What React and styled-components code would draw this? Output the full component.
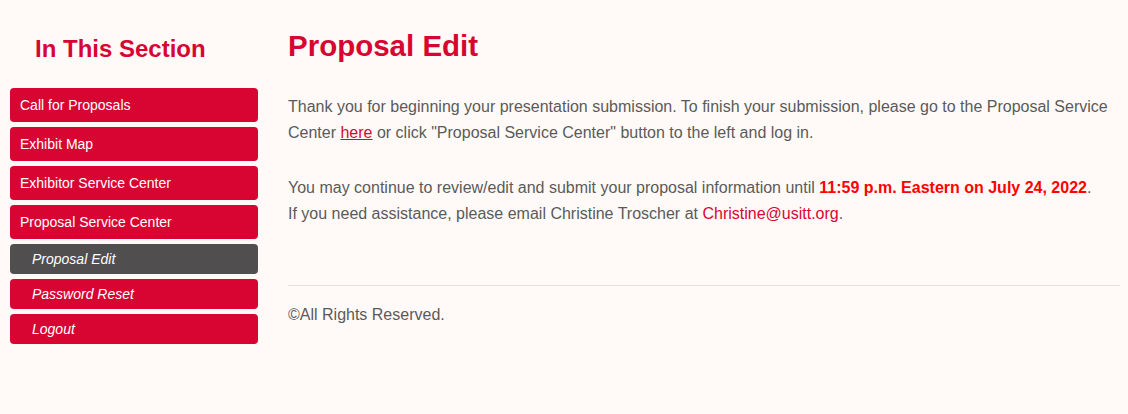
import React from "react";
import styled, { createGlobalStyle } from "styled-components";

const Global = createGlobalStyle`
  html, body { margin: 0; padding: 0; background: #fffaf8; }
  body { font-family: "Liberation Sans", Arial, sans-serif; }
`;

const Page = styled.div`
  display: flex;
  align-items: flex-start;
  gap: 30px;
  padding: 0 8px 0 10px;
  min-height: 414px;
  box-sizing: border-box;
`;

const Sidebar = styled.aside`
  width: 248px;
  flex-shrink: 0;
  display: flex;
  flex-direction: column;
`;

const SideTitle = styled.h2`
  margin: 35px 0 25px 25px;
  font-size: 24px;
  line-height: 28px;
  font-weight: bold;
  color: #d80532;
`;

const Nav = styled.nav`
  display: flex;
  flex-direction: column;
  gap: 5px;
`;

const NavItem = styled.a`
  display: flex;
  align-items: center;
  height: ${(p) => (p.$sub ? "30px" : "34px")};
  padding-left: ${(p) => (p.$sub ? "22px" : "10px")};
  border-radius: 4px;
  background: ${(p) => (p.$active ? "#504e4f" : "#d80532")};
  color: #fff;
  font-size: 14px;
  font-style: ${(p) => (p.$sub ? "italic" : "normal")};
  text-decoration: none;
`;

const Main = styled.main`
  flex: 1;
  display: flex;
  flex-direction: column;
`;

const Title = styled.h1`
  margin: 29px 0 31px;
  font-size: 29.5px;
  line-height: 34px;
  font-weight: bold;
  color: #d80532;
`;

const Para = styled.p`
  margin: 0 0 29px;
  font-size: 16px;
  line-height: 26px;
  color: #5a5a5a;
`;

const Link = styled.a`
  color: #d80532;
  text-decoration: ${(p) => (p.$underline ? "underline" : "none")};
`;

const Strong = styled.strong`
  color: #ff0000;
`;

const Rule = styled.hr`
  margin: 29px 0 0;
  border: 0;
  border-top: 1px solid #e3e0df;
`;

const Footer = styled.p`
  margin: 19px 0 0;
  font-size: 16px;
  line-height: 20px;
  color: #5a5a5a;
`;

const items = [
  { label: "Call for Proposals" },
  { label: "Exhibit Map" },
  { label: "Exhibitor Service Center" },
  { label: "Proposal Service Center" },
  { label: "Proposal Edit", sub: true, active: true },
  { label: "Password Reset", sub: true },
  { label: "Logout", sub: true },
];

export default function App() {
  return (
    <>
      <Global />
      <Page>
        <Sidebar>
          <SideTitle>In This Section</SideTitle>
          <Nav>
            {items.map((it) => (
              <NavItem key={it.label} href="#" $sub={it.sub} $active={it.active}>
                {it.label}
              </NavItem>
            ))}
          </Nav>
        </Sidebar>
        <Main>
          <Title>Proposal Edit</Title>
          <Para>
            Thank you for beginning your presentation submission. To finish your submission, please go to the Proposal Service
            Center <Link href="#" $underline>here</Link> or click "Proposal Service Center" button to the left and log in.
          </Para>
          <Para>
            You may continue to review/edit and submit your proposal information until{" "}
            <Strong>11:59 p.m. Eastern on July 24, 2022</Strong>.
            <br />
            If you need assistance, please email Christine Troscher at{" "}
            <Link href="#">Christine@usitt.org</Link>.
          </Para>
          <Rule />
          <Footer>©All Rights Reserved.</Footer>
        </Main>
      </Page>
    </>
  );
}
